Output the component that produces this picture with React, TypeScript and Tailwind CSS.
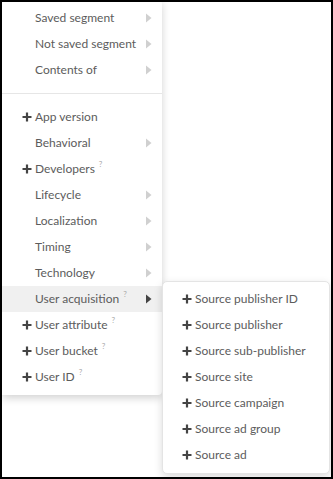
import React from "react";

interface MenuItem {
  label: string;
  plus?: boolean;
  help?: boolean;
  arrow?: boolean;
  active?: boolean;
}

const topItems: MenuItem[] = [
  { label: "Saved segment", arrow: true },
  { label: "Not saved segment", arrow: true },
  { label: "Contents of", arrow: true },
];

const mainItems: MenuItem[] = [
  { label: "App version", plus: true },
  { label: "Behavioral", arrow: true },
  { label: "Developers", plus: true, help: true },
  { label: "Lifecycle", arrow: true },
  { label: "Localization", arrow: true },
  { label: "Timing", arrow: true },
  { label: "Technology", arrow: true },
  { label: "User acquisition", help: true, arrow: true, active: true },
  { label: "User attribute", plus: true, help: true },
  { label: "User bucket", plus: true, help: true },
  { label: "User ID", plus: true, help: true },
];

const subItems = [
  "Source publisher ID",
  "Source publisher",
  "Source sub-publisher",
  "Source site",
  "Source campaign",
  "Source ad group",
  "Source ad",
];

function Plus() {
  return (
    <svg width="10" height="10" viewBox="0 0 10 10" className="shrink-0 text-[#444]">
      <path d="M5 0.5v9M0.5 5h9" stroke="currentColor" strokeWidth="2.2" />
    </svg>
  );
}

function Arrow({ dark }: { dark?: boolean }) {
  return (
    <svg width="6" height="10" viewBox="0 0 6 10" className={dark ? "text-[#444]" : "text-[#d0d0d0]"}>
      <path d="M0 0.5L5.5 5L0 9.5Z" fill="currentColor" />
    </svg>
  );
}

function Row({ item }: { item: MenuItem }) {
  return (
    <div
      className={`flex h-[26px] items-center pr-[10px] ${item.active ? "bg-[#f0f0f0]" : ""} ${
        item.plus ? "pl-[20px]" : "pl-[33px]"
      }`}
    >
      {item.plus && <Plus />}
      <span className={`${item.plus ? "ml-[3px]" : ""} text-[12px] text-[#5c5c5c]`}>{item.label}</span>
      {item.help && <span className="ml-[4px] -translate-y-[5px] text-[8px] text-[#aaa]">?</span>}
      <span className="flex-1" />
      {item.arrow && <Arrow dark={item.active} />}
    </div>
  );
}

export default function App() {
  return (
    <div className="relative h-[479px] w-[333px] overflow-hidden border-2 border-black bg-white font-['Lato',sans-serif]">
      <div className="absolute left-0 top-[-2px] w-[160px] rounded-br-[4px] rounded-tr-[4px] bg-white py-[5px] shadow-[0_3px_8px_rgba(0,0,0,0.18)]">
        {topItems.map((item) => (
          <Row key={item.label} item={item} />
        ))}
        <div className="my-[10px] h-px bg-[#e6e6e6]" />
        {mainItems.map((item) => (
          <Row key={item.label} item={item} />
        ))}
      </div>

      <div className="absolute left-[160px] top-[279px] w-[168px] rounded-[5px] border border-[#e4e4e4] bg-white pb-[5px] pt-[4px] shadow-[0_3px_8px_rgba(0,0,0,0.15)]">
        {subItems.map((label) => (
          <div key={label} className="flex h-[26px] items-center pl-[19px]">
            <Plus />
            <span className="ml-[3px] text-[12px] text-[#5c5c5c]">{label}</span>
          </div>
        ))}
      </div>
    </div>
  );
}
